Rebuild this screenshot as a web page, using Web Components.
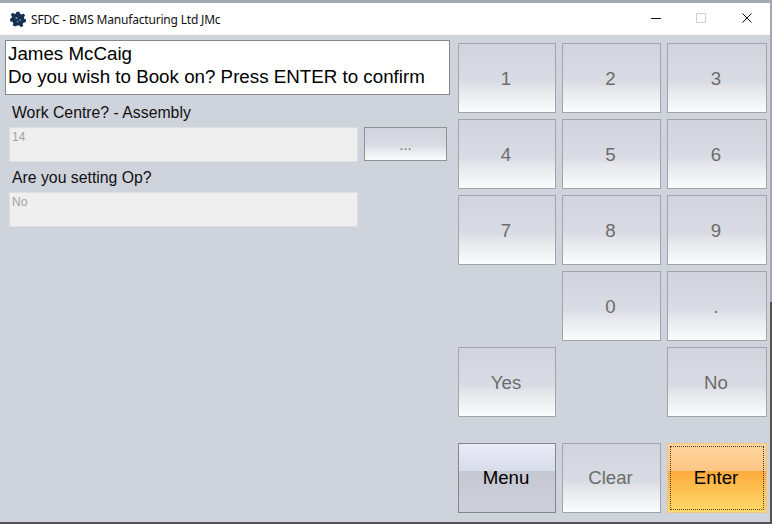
<!DOCTYPE html>
<html>
<head>
<meta charset="utf-8">
<title>SFDC</title>
<style>
html, body { margin: 0; padding: 0; }
body { width: 772px; height: 524px; overflow: hidden; background: #4a4744; font-family: "Liberation Sans", Arial, sans-serif; }
</style>
</head>
<body>
<sfdc-window>
    <sfdc-titlebar slot="title">SFDC - BMS Manufacturing Ltd JMc</sfdc-titlebar>
    <sfdc-message slot="left">James McCaig<br>Do you wish to Book on? Press ENTER to confirm</sfdc-message>
    <sfdc-field slot="left" label="Work Centre? - Assembly" value="14" browse></sfdc-field>
    <sfdc-field slot="left" label="Are you setting Op?" value="No"></sfdc-field>
    <sfdc-keypad slot="right">
        <sfdc-button>1</sfdc-button>
        <sfdc-button>2</sfdc-button>
        <sfdc-button>3</sfdc-button>
        <sfdc-button>4</sfdc-button>
        <sfdc-button>5</sfdc-button>
        <sfdc-button>6</sfdc-button>
        <sfdc-button>7</sfdc-button>
        <sfdc-button>8</sfdc-button>
        <sfdc-button>9</sfdc-button>
        <sfdc-button style="grid-column: 2">0</sfdc-button>
        <sfdc-button>.</sfdc-button>
        <sfdc-button>Yes</sfdc-button>
        <sfdc-button style="grid-column: 3">No</sfdc-button>
        <sfdc-button kind="menu" class="last">Menu</sfdc-button>
        <sfdc-button class="last">Clear</sfdc-button>
        <sfdc-button kind="enter" class="last">Enter</sfdc-button>
    </sfdc-keypad>
</sfdc-window>

<script>
class SfdcWindow extends HTMLElement {
    constructor() {
        super()
        this.attachShadow({ mode: "open" })
        this.shadowRoot.innerHTML = `
        <style>
        :host {
            display: block;
            width: 772px;
            height: 524px;
            box-sizing: border-box;
            padding: 3px 0 2px 0;
            background: linear-gradient(#a4a8b0, #a4a8b0 302px, #55534f 302px);
        }
        .frame {
            width: 770px;
            height: 519px;
            display: flex;
            flex-direction: column;
            background: #cfd3dc;
        }
        .body {
            flex: 1;
            display: flex;
        }
        .left {
            width: 445px;
            padding: 5px 0 0 5px;
            display: flex;
            flex-direction: column;
        }
        .right {
            padding: 8px 0 0 8px;
        }
        </style>
        <div class="frame">
            <slot name="title"></slot>
            <div class="body">
                <div class="left"><slot name="left"></slot></div>
                <div class="right"><slot name="right"></slot></div>
            </div>
        </div>
        `
    }
}

class SfdcTitlebar extends HTMLElement {
    constructor() {
        super()
        this.attachShadow({ mode: "open" })
        this.shadowRoot.innerHTML = `
        <style>
        :host {
            display: flex;
            align-items: center;
            height: 32px;
            background: #fff;
            color: #111;
            font: 12px "Noto Sans", sans-serif;
            letter-spacing: -0.19px;
        }
        .logo { margin: 0 5px 0 10px; }
        .text { flex: 1; }
        .ctl { width: 45px; height: 32px; display: flex; align-items: center; justify-content: center; }
        .ctl svg { display: block; margin-bottom: 2px; }
        .max { margin-right: 1px; }
        .close { margin-right: 1px; }
        </style>
        <svg class="logo" width="16" height="16" viewBox="0 0 16 16">
            <path fill="#16304f" d="M6.500 .8h3l.5 2 1.600.7 1.800-1 1.700 2-1.200 1.700.4 1.600 1.900.8-.5 2.700-2 .2-1 1.500.6 2-2.500 1.200-1.300-1.600H7.200L5.200 15.400 2.700 14.200l.6-2-1-1.500-2-.2L-.2 7.800 1.600 7 2 5.400.8 3.700l1.700-2 1.800 1L5.800 2.800z"/>
            <circle cx="6.500" cy="7" r="1.100" fill="#7d9abb"/>
            <circle cx="10" cy="9" r="1" fill="#5f82a8"/>
            <circle cx="7.500" cy="10.800" r=".8" fill="#7d9abb"/>
        </svg>
        <span class="text"><slot></slot></span>
        <div class="ctl"><svg width="10" height="10" viewBox="0 0 10 10"><path d="M0 5.500h10" stroke="#111" fill="none"/></svg></div>
        <div class="ctl max"><svg width="10" height="10" viewBox="0 0 10 10"><path d="M.5.500h9v9h-9z" stroke="#cfcfcf" fill="none"/></svg></div>
        <div class="ctl close"><svg width="10" height="10" viewBox="0 0 10 10"><path d="M.5.500l9 9M9.500.500l-9 9" stroke="#111" fill="none"/></svg></div>
        `
    }
}

class SfdcMessage extends HTMLElement {
    constructor() {
        super()
        this.attachShadow({ mode: "open" })
        this.shadowRoot.innerHTML = `
        <style>
        :host {
            display: block;
            box-sizing: border-box;
            width: 445px;
            height: 55px;
            padding: 1px 0 0 2px;
            background: #fff;
            border: 1px solid #85878c;
            color: #000;
            font-size: 18.75px;
            line-height: 23px;
        }
        </style>
        <slot></slot>
        `
    }
}

class SfdcField extends HTMLElement {
    constructor() {
        super()
        this.attachShadow({ mode: "open" })
    }
    connectedCallback() {
        const browse = this.hasAttribute("browse")
            ? `<sfdc-button kind="small">...</sfdc-button>` : ""
        this.shadowRoot.innerHTML = `
        <style>
        :host { display: block; margin-left: 4px; }
        .label {
            height: 32px;
            padding-left: 3px;
            box-sizing: border-box;
            padding-top: 8px;
            color: #111;
            font-size: 15.8px;
            line-height: 19px;
        }
        .row { display: flex; gap: 6px; height: 33px; }
        .input {
            box-sizing: border-box;
            width: 349px;
            height: 35px;
            padding: 2px 0 0 2px;
            background: #efefef;
            border: 1px solid #dddee0;
            color: #a2a2a2;
            font-size: 12px;
            line-height: 14px;
        }
        </style>
        <div class="label">${this.getAttribute("label")}</div>
        <div class="row">
            <div class="input">${this.getAttribute("value")}</div>
            ${browse}
        </div>
        `
    }
}

class SfdcKeypad extends HTMLElement {
    constructor() {
        super()
        this.attachShadow({ mode: "open" })
        this.shadowRoot.innerHTML = `
        <style>
        :host {
            display: grid;
            grid-template-columns: 98px 99px 100px;
            grid-auto-rows: auto;
            gap: 6px;
        }
        ::slotted(.last) { margin-top: 20px; padding-top: 0; padding-bottom: 1px; }
        </style>
        <slot></slot>
        `
    }
}

class SfdcButton extends HTMLElement {
    constructor() {
        super()
        this.attachShadow({ mode: "open" })
        this.shadowRoot.innerHTML = `
        <style>
        :host {
            display: flex;
            box-sizing: border-box;
            height: 70px;
            position: relative;
            align-items: center;
            justify-content: center;
            padding: 1px 2px 0 0;
            border: 1px solid #a2a4a8;
            background: linear-gradient(#d1d4dd, #d9dce3 55%, #e4e6eb 65%, #fbfcfd);
            color: #6c6c6c;
            font-size: 18.67px;
        }
        :host([kind="small"]) {
            width: 83px;
            height: 34px;
            font-size: 15px;
            padding: 0;
            border-color: #909296;
        }
        :host([kind="menu"]) {
            border-color: #85878b;
            color: #000;
            background: linear-gradient(#e9ecf8, #d9dce9 39%, #c5c7d1 40%, #cdd0da);
        }
        :host([kind="enter"]) {
            border-color: #f2c57f;
            color: #000;
            background: linear-gradient(#fdd6a0, #fdc584 39%, #fdab3c 40%, #ffdb6c);
        }
        :host([kind="enter"]) .focus {
            position: absolute;
            inset: 2px;
            border: 1px dotted #4a3a1c;
        }
        </style>
        <div class="focus"></div>
        <slot></slot>
        `
    }
}

customElements.define('sfdc-window', SfdcWindow)
customElements.define('sfdc-titlebar', SfdcTitlebar)
customElements.define('sfdc-message', SfdcMessage)
customElements.define('sfdc-field', SfdcField)
customElements.define('sfdc-keypad', SfdcKeypad)
customElements.define('sfdc-button', SfdcButton)
</script>
</body>
</html>
